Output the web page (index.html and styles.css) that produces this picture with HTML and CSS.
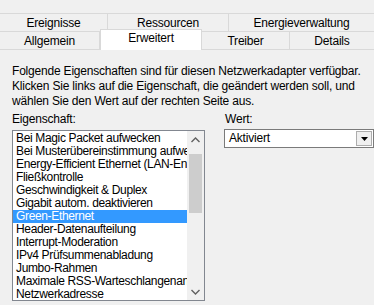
FILE: index.html
```html
<!DOCTYPE html>
<html lang="de">
<head>
<meta charset="utf-8">
<link rel="stylesheet" href="styles.css">
</head>
<body>
<div class="window">
  <div class="tabs">
    <div class="tabrow">
      <div class="tab t-ereig">Ereignisse</div>
      <div class="tab t-ress">Ressourcen</div>
      <div class="tab t-energ">Energieverwaltung</div>
    </div>
    <div class="tabrow">
      <div class="tab t-allg">Allgemein</div>
      <div class="tab t-erw selected">Erweitert</div>
      <div class="tab t-treib">Treiber</div>
      <div class="tab t-det">Details</div>
    </div>
  </div>
  <div class="panel">
    <p class="desc">Folgende Eigenschaften sind für diesen Netzwerkadapter verfügbar.<br>Klicken Sie links auf die Eigenschaft, die geändert werden soll, und<br>wählen Sie den Wert auf der rechten Seite aus.</p>
    <div class="fields">
      <div class="col-left">
        <div class="label">Eigenschaft:</div>
        <div class="listbox">
          <div class="items">
            <div class="item">Bei Magic Packet aufwecken</div>
            <div class="item">Bei Musterübereinstimmung aufwecken</div>
            <div class="item">Energy-Efficient Ethernet (LAN-Energiesparmodus)</div>
            <div class="item">Fließkontrolle</div>
            <div class="item">Geschwindigkeit &amp; Duplex</div>
            <div class="item">Gigabit autom. deaktivieren</div>
            <div class="item sel">Green-Ethernet</div>
            <div class="item">Header-Datenaufteilung</div>
            <div class="item">Interrupt-Moderation</div>
            <div class="item">IPv4 Prüfsummenabladung</div>
            <div class="item">Jumbo-Rahmen</div>
            <div class="item">Maximale RSS-Warteschlangenanzahl</div>
            <div class="item">Netzwerkadresse</div>
          </div>
          <div class="scrollbar">
            <div class="arrow">
              <svg width="9" height="6" viewBox="0 0 9 6"><path d="M0.5 5 L4.5 1 L8.5 5" fill="none" stroke="#606060" stroke-width="1.4"/></svg>
            </div>
            <div class="track"><div class="thumb"></div></div>
            <div class="arrow">
              <svg width="9" height="6" viewBox="0 0 9 6"><path d="M0.5 1 L4.5 5 L8.5 1" fill="none" stroke="#606060" stroke-width="1.4"/></svg>
            </div>
          </div>
        </div>
      </div>
      <div class="col-right">
        <div class="label">Wert:</div>
        <div class="select">
          <span class="value">Aktiviert</span>
          <span class="dropbtn"><svg width="7" height="4" viewBox="0 0 7 4"><path d="M0 0 H7 L3.5 4 Z" fill="#000"/></svg></span>
        </div>
      </div>
    </div>
  </div>
</div>
</body>
</html>
```

FILE: styles.css
```css
html, body {
  margin: 0;
  padding: 0;
  background: #f0f0f0;
}
body {
  font-family: "Liberation Sans", Arial, sans-serif;
  font-size: 12px;
  color: #000;
  width: 374px;
  height: 305px;
  overflow: hidden;
}
.window {
  padding-top: 13px;
}
.tabs {
  display: flex;
  flex-direction: column;
}
.tabrow {
  display: flex;
  height: 18px;
  border-top: 1px solid #d9d9d9;
  box-sizing: border-box;
}
.tabrow + .tabrow {
  height: 17px;
  border-bottom: 1px solid #d9d9d9;
  box-sizing: content-box;
}
.tab {
  display: flex;
  align-items: center;
  justify-content: center;
  border-right: 1px solid #d9d9d9;
  box-sizing: border-box;
  background: #f0f0f0;
  line-height: 14px;
  letter-spacing: -0.2px;
}
.t-ereig { width: 108px; }
.t-ress { width: 121px; }
.t-energ { flex: 1; border-right: none; }
.t-allg { width: 100px; }
.t-erw { width: 102px; }
.t-treib { width: 88px; }
.t-det { flex: 1; border-right: none; }
.tab.selected {
  background: #fff;
  margin-top: -3px;
  margin-bottom: -1px;
  height: 21px;
  padding-bottom: 5px;
  border-top: 1px solid #d9d9d9;
  border-left: 1px solid #d9d9d9;
}
.panel {
  padding: 14px 0 0 12px;
}
.desc {
  margin: 0;
  line-height: 15px;
  letter-spacing: -0.2px;
}
.fields {
  display: flex;
  margin-top: 3px;
}
.label {
  line-height: 15px;
  height: 15px;
  letter-spacing: -0.2px;
}
.col-left {
  width: 193px;
}
.col-right {
  margin-left: 19px;
  width: 150px;
}
.col-right .label {
  margin-left: 1px;
}
.listbox {
  margin-top: 3px;
  height: 171px;
  border: 1px solid #828790;
  background: #fff;
  display: flex;
  box-sizing: border-box;
}
.items {
  flex: 1;
  overflow: hidden;
  padding-top: 1px;
}
.item {
  height: 13px;
  line-height: 13px;
  padding-left: 3px;
  white-space: nowrap;
  overflow: hidden;
  letter-spacing: -0.35px;
}
.item.sel {
  background: #3399ff;
  color: #fff;
}
.scrollbar {
  width: 17px;
  background: #f0f0f0;
  display: flex;
  flex-direction: column;
}
.arrow {
  height: 17px;
  display: flex;
  align-items: center;
  justify-content: center;
}
.track {
  flex: 1;
  padding: 6px 2px 0 2px;
}
.thumb {
  height: 59px;
  background: #cdcdcd;
}
.select {
  margin-top: 2px;
  height: 19px;
  border: 1px solid #7a7a7a;
  background: #fff;
  display: flex;
  align-items: center;
  box-sizing: border-box;
}
.value {
  flex: 1;
  padding-left: 4px;
  line-height: 15px;
  letter-spacing: -0.2px;
}
.dropbtn {
  width: 16px;
  height: 15px;
  margin-right: 1px;
  border: 1px solid #adadad;
  background: #f0f0f0;
  box-sizing: border-box;
  display: flex;
  align-items: center;
  justify-content: center;
}
```
